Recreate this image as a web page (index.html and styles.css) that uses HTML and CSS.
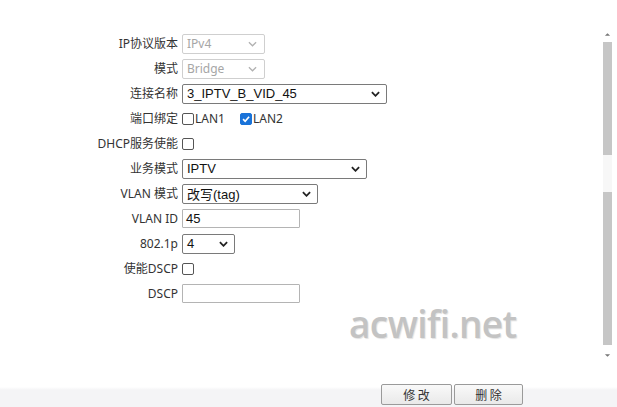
FILE: index.html
```html
<!DOCTYPE html>
<html lang="zh">
<head>
<meta charset="utf-8">
<link rel="stylesheet" href="styles.css">
</head>
<body>
<div class="page">
  <div class="main">
    <div class="form">
      <div class="label">IP协议版本</div>
      <div class="ctl"><div class="sel dis w83"><span>IPv4</span><svg class="chev" viewBox="0 0 10 6"><path d="M1 1 L5 5 L9 1"/></svg></div></div>

      <div class="label">模式</div>
      <div class="ctl"><div class="sel dis w83"><span>Bridge</span><svg class="chev" viewBox="0 0 10 6"><path d="M1 1 L5 5 L9 1"/></svg></div></div>

      <div class="label">连接名称</div>
      <div class="ctl"><div class="sel w205"><span>3_IPTV_B_VID_45</span><svg class="chev" viewBox="0 0 10 6"><path d="M1 1 L5 5 L9 1"/></svg></div></div>

      <div class="label">端口绑定</div>
      <div class="ctl">
        <span class="cb"></span><span class="cbt">LAN1</span>
        <span class="cb on lan2"><svg viewBox="0 0 12 12"><path d="M2.5 6.2 L5 8.7 L9.7 3.3"/></svg></span><span class="cbt">LAN2</span>
      </div>

      <div class="label">DHCP服务使能</div>
      <div class="ctl"><span class="cb"></span></div>

      <div class="label">业务模式</div>
      <div class="ctl"><div class="sel w185"><span>IPTV</span><svg class="chev" viewBox="0 0 10 6"><path d="M1 1 L5 5 L9 1"/></svg></div></div>

      <div class="label">VLAN 模式</div>
      <div class="ctl"><div class="sel w136"><span>改写(tag)</span><svg class="chev" viewBox="0 0 10 6"><path d="M1 1 L5 5 L9 1"/></svg></div></div>

      <div class="label">VLAN ID</div>
      <div class="ctl"><div class="inp">45</div></div>

      <div class="label">802.1p</div>
      <div class="ctl"><div class="sel w53"><span>4</span><svg class="chev" viewBox="0 0 10 6"><path d="M1 1 L5 5 L9 1"/></svg></div></div>

      <div class="label">使能DSCP</div>
      <div class="ctl"><span class="cb"></span></div>

      <div class="label">DSCP</div>
      <div class="ctl"><div class="inp empty"></div></div>
    </div>

    <div class="scrollbar">
      <svg class="arrow" viewBox="0 0 8 5"><path d="M1 4 L4 1 L7 4 Z"/></svg>
      <div class="thumb t1"></div>
      <div class="gap"></div>
      <div class="thumb t2"></div>
      <svg class="arrow down" viewBox="0 0 8 5"><path d="M1 1 L4 4 L7 1 Z"/></svg>
    </div>

    <div class="watermark">acwifi.net</div>
  </div>

  <div class="footer">
    <button class="btn b1">修 改</button>
    <button class="btn b2">删 除</button>
  </div>
</div>
</body>
</html>
```

FILE: styles.css
```css
html, body {
  margin: 0;
  padding: 0;
  background: #fff;
}
body {
  font-family: "Noto Sans", "Noto Sans CJK SC", sans-serif;
  color: #333;
}
.page {
  width: 617px;
  height: 407px;
  overflow: hidden;
  display: flex;
  flex-direction: column;
}
.main {
  position: relative;
  height: 384px;
  display: flex;
}
.form {
  flex: 1;
  padding-top: 31px;
  display: grid;
  grid-template-columns: 178px 1fr;
  grid-auto-rows: 25px;
  column-gap: 4px;
  align-content: start;
  align-items: center;
}
.label {
  text-align: right;
  font-family: "Noto Sans", "Noto Sans CJK SC", sans-serif;
  font-size: 12px;
  line-height: 14px;
  color: #333;
  white-space: nowrap;
}
.ctl {
  display: flex;
  align-items: center;
  height: 25px;
}
.sel {
  box-sizing: border-box;
  height: 20px;
  border: 1px solid #7a7a7a;
  border-radius: 2px;
  background: #fff;
  display: flex;
  align-items: center;
  justify-content: space-between;
  padding: 0 6px 0 4px;
  font-family: "Liberation Sans", "Noto Sans CJK SC", sans-serif;
  font-size: 13px;
  color: #111;
}
.sel span {
  white-space: nowrap;
}
.chev {
  width: 9px;
  height: 6px;
  fill: none;
  stroke: #222;
  stroke-width: 2;
}
.sel.dis {
  border-color: #cfcfcf;
  color: #a6a6a6;
  font-family: "Noto Sans", sans-serif;
  font-size: 12px;
}
.sel.dis .chev {
  stroke: #b0b0b0;
  stroke-width: 1.4;
  margin-right: 1px;
}
.w83 { width: 83px; }
.w205 { width: 205px; }
.w185 { width: 185px; }
.w136 { width: 136px; }
.w53 { width: 53px; }

.inp {
  box-sizing: border-box;
  width: 118px;
  height: 19px;
  border: 1px solid #b4b4b4;
  border-radius: 1px;
  padding: 0 3px;
  font-family: "Liberation Sans", sans-serif;
  font-size: 13px;
  line-height: 17px;
  color: #111;
}
.cb {
  box-sizing: border-box;
  width: 12px;
  height: 12px;
  border: 1px solid #555;
  border-radius: 2px;
  background: #fff;
  display: inline-flex;
  flex: none;
}
.cb.on {
  background: #1a73d9;
  border-color: #1a73d9;
}
.cb svg {
  width: 10px;
  height: 10px;
  fill: none;
  stroke: #fff;
  stroke-width: 2;
}
.lan2 {
  margin-left: 15px;
}
.cbt {
  font-family: "Noto Sans", sans-serif;
  font-size: 12px;
  color: #333;
  margin-left: 1px;
}

.scrollbar {
  width: 17px;
  margin-right: 1px;
  padding-top: 32px;
  display: flex;
  flex-direction: column;
  align-items: center;
}
.arrow {
  width: 7px;
  height: 5px;
  fill: #777;
  margin-bottom: 5px;
}
.arrow.down {
  margin-top: 8px;
  margin-bottom: 0;
}
.thumb {
  width: 9px;
  background: #c6c6c6;
}
.t1 { height: 113px; }
.gap { height: 37px; width: 9px; background: #f7f7f7; }
.t2 { height: 153px; }

.watermark {
  position: absolute;
  left: 349px;
  top: 298px;
  font-family: "Open Sans", "Noto Sans", sans-serif;
  font-weight: 600;
  font-size: 37px;
  color: #c3c3c3;
  letter-spacing: -0.6px;
  text-shadow: 1px 1px 1px #e2e2e2;
}

.footer {
  height: 23px;
  display: flex;
  align-items: flex-start;
  padding-left: 381px;
  background: linear-gradient(to bottom, #fff 0, #fff 3px, #f4f4f6 6px, #f4f4f6 100%);
}
.btn {
  box-sizing: border-box;
  height: 21px;
  border: 1px solid #9a9a9a;
  border-radius: 2px;
  background: linear-gradient(to bottom, #f9f9f9, #e9e9e9);
  font-family: "Noto Sans CJK SC", sans-serif;
  font-size: 12px;
  color: #333;
  padding: 0;
  line-height: 18px;
}
.b1 { width: 71px; margin-right: 2px; }
.b2 { width: 69px; }
```
